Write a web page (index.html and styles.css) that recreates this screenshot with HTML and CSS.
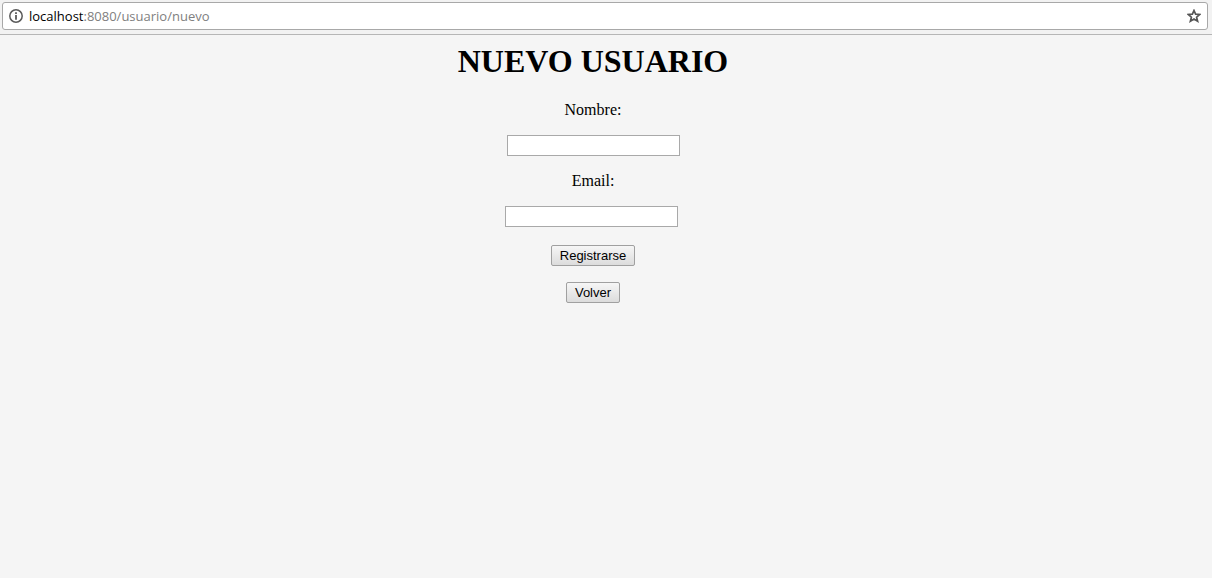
FILE: index.html
```html
<!DOCTYPE html>
<html lang="es">
<head>
  <meta charset="utf-8">
  <title>Nuevo usuario</title>
  <link rel="stylesheet" href="styles.css">
</head>
<body>
  <header class="toolbar">
    <div class="address">
      <svg class="info" viewBox="0 0 14 14" aria-hidden="true">
        <circle cx="7" cy="7" r="6.2" fill="none" stroke="#5a5a5a" stroke-width="1.5"/>
        <path d="M6.1 3.2h1.8v1.7H6.1zM6.1 6h1.8v4.8H6.1z" fill="#5a5a5a"/>
      </svg>
      <div class="url"><span class="host">localhost</span>:8080/usuario/nuevo</div>
      <button class="bookmark" type="button" aria-label="Marcador">
        <svg class="star" viewBox="0 0 14 14" aria-hidden="true">
          <path d="M7 1.5 8.6 5.2 12.7 5.5 9.6 8.2 10.6 12.2 7 10 3.4 12.2 4.4 8.2 1.3 5.5 5.4 5.2z" fill="none" stroke="#555" stroke-width="1.7"/>
        </svg>
      </button>
    </div>
  </header>
  <main class="page">
    <h1 class="title">NUEVO USUARIO</h1>
    <form class="form">
      <label class="label" for="nombre">Nombre:</label>
      <div class="row"><input class="field" id="nombre" type="text"></div>
      <label class="label" for="email">Email:</label>
      <div class="row"><input class="field" id="email" type="text">&nbsp;</div>
      <div class="actions">
        <button class="button" type="submit">Registrarse</button>
        <button class="button" type="button">Volver</button>
      </div>
    </form>
  </main>
</body>
</html>
```
FILE: styles.css
```css
body {
  margin: 0;
  background: #f5f5f5;
  color: #000;
  font: 16px/18px "Liberation Serif", "Times New Roman", serif;
}

.toolbar {
  padding: 2px 4px 4px 2px;
  background: #f2f2f2;
  border-bottom: 1px solid #b6b6b6;
}

.address {
  display: flex;
  align-items: center;
  gap: 6px;
  height: 26px;
  padding: 0 6px;
  background: #fff;
  border: 1px solid #a8a8a8;
  border-radius: 3px;
}

.info,
.star {
  display: block;
  flex: none;
  width: 14px;
  height: 14px;
}

.url {
  flex: 1;
  color: #808080;
  font: 13px/18px "Open Sans", "Noto Sans", sans-serif;
}

.host {
  color: #000;
}

.bookmark {
  padding: 0;
  background: none;
  border: 0;
}

.page {
  padding: 8px 26px 8px 0;
  text-align: center;
}

.title {
  margin: 0 0 21px;
  font-size: 32px;
  line-height: 37px;
}

.form {
  display: flex;
  flex-direction: column;
  align-items: center;
  gap: 16px;
}

.row {
  display: flex;
}

.field {
  box-sizing: border-box;
  width: 173px;
  height: 21px;
  padding: 1px;
  background: #fff;
  border: 1px solid #a9a9a9;
  font: 13px "Liberation Sans", Arial, sans-serif;
}

.actions {
  display: flex;
  flex-direction: column;
  align-items: center;
  gap: 16px;
  padding-top: 2px;
}

.button {
  height: 21px;
  padding: 0 8px;
  background: linear-gradient(#f6f6f6, #dcdcdc);
  border: 1px solid #a0a0a0;
  border-radius: 2px;
  color: #000;
  font: 13px/15px "Liberation Sans", Arial, sans-serif;
}
```
